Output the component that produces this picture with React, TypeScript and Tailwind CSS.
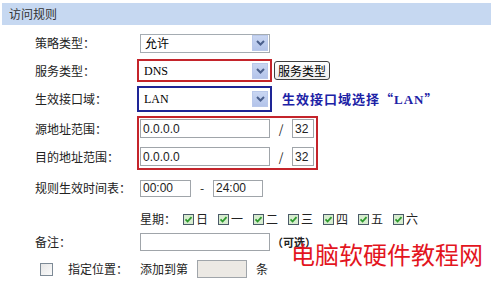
import React from "react";

const CJK = '"Noto Sans CJK SC", "Noto Sans", sans-serif';

function Arrow() {
  return (
    <div className="w-[16px] h-[16px] mr-[1px] bg-gradient-to-b from-[#c9d6f2] to-[#b3c4ea] border border-[#b9c8ea] flex items-center justify-center">
      <svg width="9" height="6" viewBox="0 0 9 6">
        <path d="M1 1 L4.5 4.5 L8 1" stroke="#4a5f8c" strokeWidth="2" fill="none" />
      </svg>
    </div>
  );
}

function Select({ value, serif, w = "w-[130px]", h = "h-[20px]", border = true }: { value: string; serif?: boolean; w?: string; h?: string; border?: boolean }) {
  return (
    <div className={`${w} ${h} ${border ? "border border-[#a5acb2]" : ""} bg-white flex items-center`}>
      <span
        className="flex-1 pl-[4px] text-[12px] text-black leading-none"
        style={serif ? { fontFamily: '"Liberation Serif", serif' } : undefined}
      >
        {value}
      </span>
      <Arrow />
    </div>
  );
}

function Input({ value = "", w, h = "h-[19px]", gray }: { value?: string; w: string; h?: string; gray?: boolean }) {
  return (
    <div
      className={`${w} ${h} border border-[#a0a5aa] ${gray ? "bg-[#ece9e4]" : "bg-white"} flex items-center pl-[2px] text-[12px] text-[#222] leading-none`}
      style={{ fontFamily: '"Liberation Sans", sans-serif' }}
    >
      {value}
    </div>
  );
}

function Check() {
  return (
    <svg width="11" height="11" viewBox="0 0 11 11" className="shrink-0">
      <rect x="0.5" y="0.5" width="10" height="10" fill="#d7eccf" stroke="#4b5a68" />
      <path d="M2.5 5.3 L4.6 7.5 L8.5 3.2" stroke="#2d9a2d" strokeWidth="1.8" fill="none" />
    </svg>
  );
}

function Label({ children }: { children: React.ReactNode }) {
  return <div className="w-[137px] pl-[35px] text-[12px] text-[#222] leading-none">{children}</div>;
}

export default function App() {
  const days = ["日", "一", "二", "三", "四", "五", "六"];
  return (
    <div className="relative w-[493px] h-[281px] bg-white overflow-hidden" style={{ fontFamily: CJK }}>
      <div className="mt-[3px] mx-[2px] h-[22px] bg-[#c6d8f1] flex items-center pl-[7px] text-[12px] text-[#333]">
        访问规则
      </div>

      {/* 策略类型 */}
      <div className="mt-[8px] h-[20px] flex items-center">
        <Label>策略类型：</Label>
        <div className="ml-[3px]">
          <Select value="允许" h="h-[19px]" />
        </div>
      </div>

      {/* 服务类型 */}
      <div className="mt-[6px] flex items-center">
        <Label>服务类型：</Label>
        <div className="border-2 border-[#c4242b] p-[1px]">
          <Select value="DNS" serif w="w-[129px]" h="h-[17px]" border={false} />
        </div>
        <div className="ml-[2px] h-[19px] px-[3px] border border-[#404040] rounded-[3px] bg-gradient-to-b from-white to-[#ececec] flex items-center text-[12px] text-black leading-none">
          服务类型
        </div>
      </div>

      {/* 生效接口域 */}
      <div className="mt-[4px] flex items-center">
        <Label>生效接口域：</Label>
        <div className="border-2 border-[#1e2596] p-[1px]">
          <Select value="LAN" serif w="w-[129px]" h="h-[20px]" border={false} />
        </div>
        <div className="ml-[10px] text-[13px] font-bold text-[#1c22a6] tracking-[1px] leading-none">
          生效接口域选择“<span style={{ fontFamily: '"Liberation Serif", serif' }}>LAN</span>”
        </div>
      </div>

      {/* 地址范围 */}
      <div className="mt-[4px] flex">
        <div className="flex flex-col pt-[3px] gap-[9px]">
          <div className="h-[19px] flex items-center"><Label>源地址范围：</Label></div>
          <div className="h-[19px] flex items-center"><Label>目的地址范围：</Label></div>
        </div>
        <div className="border-2 border-[#c4242b] pl-[1px] pr-[2px] pt-[1px] pb-[2px] flex flex-col gap-[9px]">
          <div className="flex items-center">
            <Input value="0.0.0.0" w="w-[130px]" />
            <span className="w-[22px] text-center text-[12px] text-[#222]">/</span>
            <Input value="32" w="w-[22px]" />
          </div>
          <div className="flex items-center">
            <Input value="0.0.0.0" w="w-[130px]" />
            <span className="w-[22px] text-center text-[12px] text-[#222]">/</span>
            <Input value="32" w="w-[22px]" />
          </div>
        </div>
      </div>

      {/* 时间表 */}
      <div className="mt-[9px] flex items-center">
        <Label>规则生效时间表：</Label>
        <div className="ml-[3px] flex items-center">
          <Input value="00:00" w="w-[51px]" h="h-[17px]" />
          <span className="w-[22px] text-center text-[12px] text-[#222]">-</span>
          <Input value="24:00" w="w-[50px]" h="h-[17px]" />
        </div>
      </div>

      {/* 星期 */}
      <div className="mt-[15px] flex items-center h-[14px]">
        <div className="w-[140px]" />
        <span className="text-[12px] text-[#222] leading-none w-[43px]">星期：</span>
        <div className="flex items-center">
          {days.map((d) => (
            <div key={d} className="w-[35px] flex items-center gap-[2px]">
              <Check />
              <span className="text-[12px] text-[#222] leading-none">{d}</span>
            </div>
          ))}
        </div>
      </div>

      {/* 备注 */}
      <div className="mt-[7px] flex items-center">
        <Label>备注：</Label>
        <div className="ml-[3px] flex items-center">
          <Input w="w-[130px]" h="h-[18px]" />
          <span className="ml-[2px] text-[11px] font-bold text-[#222] leading-none">（可选）</span>
        </div>
      </div>

      {/* 指定位置 */}
      <div className="mt-[9px] flex items-center">
        <div className="w-[40px]" />
        <div className="w-[13px] h-[13px] border border-[#7d8a96] bg-gradient-to-br from-[#e6e6e6] to-[#fbfbfb]" />
        <span className="ml-[15px] w-[72px] text-[12px] text-[#222] leading-none">指定位置：</span>
        <span className="text-[12px] text-[#222] leading-none w-[57px]">添加到第</span>
        <Input w="w-[50px]" h="h-[18px]" gray />
        <span className="ml-[9px] text-[12px] text-[#222] leading-none">条</span>
      </div>

      <div className="absolute left-[291px] top-[242px] text-[24px] text-[#e3151e] leading-none" style={{ fontFamily: CJK }}>
        电脑软硬件教程网
      </div>
    </div>
  );
}
